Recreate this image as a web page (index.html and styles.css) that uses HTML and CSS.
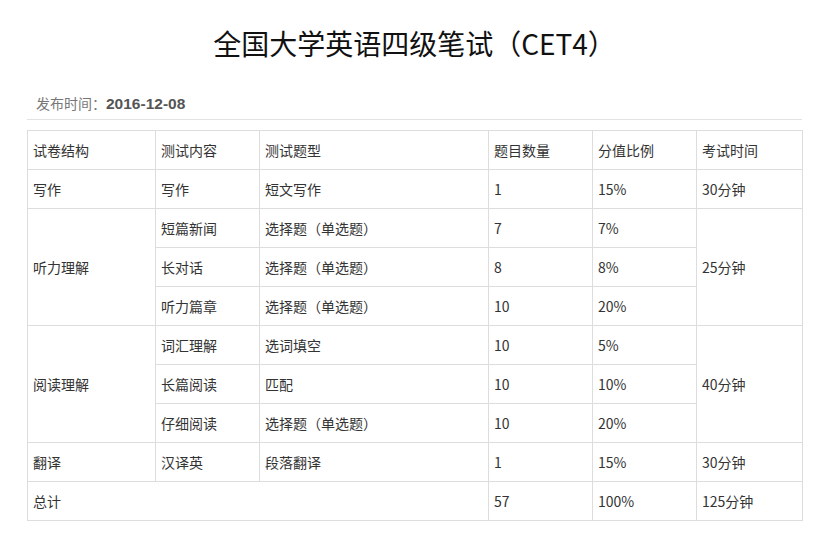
FILE: index.html
```html
<!DOCTYPE html>
<html lang="zh-CN">
<head>
<meta charset="utf-8">
<title>全国大学英语四级笔试（CET4）</title>
<link rel="stylesheet" href="styles.css">
</head>
<body>
<div class="page">
  <h1 class="title">全国大学英语四级笔试（CET4）</h1>
  <div class="meta">发布时间：<b>2016-12-08</b></div>
  <table class="exam">
    <colgroup>
      <col class="c1"><col class="c2"><col class="c3"><col class="c4"><col class="c5"><col class="c6">
    </colgroup>
    <tr><td>试卷结构</td><td>测试内容</td><td>测试题型</td><td>题目数量</td><td>分值比例</td><td>考试时间</td></tr>
    <tr><td>写作</td><td>写作</td><td>短文写作</td><td>1</td><td>15%</td><td>30分钟</td></tr>
    <tr><td rowspan="3">听力理解</td><td>短篇新闻</td><td>选择题（单选题）</td><td>7</td><td>7%</td><td rowspan="3">25分钟</td></tr>
    <tr><td>长对话</td><td>选择题（单选题）</td><td>8</td><td>8%</td></tr>
    <tr><td>听力篇章</td><td>选择题（单选题）</td><td>10</td><td>20%</td></tr>
    <tr><td rowspan="3">阅读理解</td><td>词汇理解</td><td>选词填空</td><td>10</td><td>5%</td><td rowspan="3">40分钟</td></tr>
    <tr><td>长篇阅读</td><td>匹配</td><td>10</td><td>10%</td></tr>
    <tr><td>仔细阅读</td><td>选择题（单选题）</td><td>10</td><td>20%</td></tr>
    <tr><td>翻译</td><td>汉译英</td><td>段落翻译</td><td>1</td><td>15%</td><td>30分钟</td></tr>
    <tr><td colspan="3">总计</td><td>57</td><td>100%</td><td>125分钟</td></tr>
  </table>
</div>
</body>
</html>
```
FILE: styles.css
```css
html, body {
  margin: 0;
  padding: 0;
  background: #fff;
}
body {
  font-family: "Noto Sans CJK SC", "Noto Sans", "Liberation Sans", sans-serif;
  color: #333;
}
.page {
  width: 775px;
  margin-left: 27px;
}
.title {
  margin: 23px 0 0;
  font-size: 28px;
  line-height: 40px;
  font-weight: normal;
  color: #111;
  text-align: center;
}
.meta {
  margin-top: 30px;
  padding: 0 0 5px 9px;
  font-size: 14px;
  line-height: 20px;
  color: #777;
  border-bottom: 1px solid #e2e2e2;
  width: 766px;
}
.meta b {
  color: #555;
  font-family: "Liberation Sans", "Noto Sans", sans-serif;
  font-size: 15.5px;
  font-weight: bold;
}
.exam {
  margin-top: 10px;
  width: 775px;
  border-collapse: collapse;
  table-layout: fixed;
  font-size: 14px;
}
.exam td {
  border: 1px solid #ddd;
  height: 39px;
  padding: 0 5px;
  line-height: 20px;
  vertical-align: middle;
  box-sizing: border-box;
  color: #333;
  white-space: nowrap;
}
.c1 { width: 128px; }
.c2 { width: 104px; }
.c3 { width: 229px; }
.c4 { width: 104px; }
.c5 { width: 104px; }
.c6 { width: 106px; }
```
